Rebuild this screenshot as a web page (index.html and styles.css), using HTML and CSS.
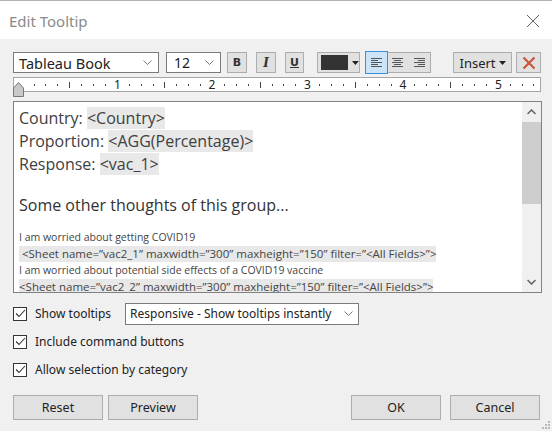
FILE: index.html
```html
<!DOCTYPE html>
<html>
<head>
<meta charset="utf-8">
<link rel="stylesheet" href="styles.css">
</head>
<body>
<div class="dialog">
  <div class="titlebar">
    <span class="title">Edit Tooltip</span>
    <svg class="close" width="14" height="14" viewBox="0 0 14 14"><path d="M1 1L13 13M13 1L1 13" stroke="#666" stroke-width="1" fill="none"/></svg>
  </div>
  <div class="content">
    <div class="toolbar">
      <div class="select font-select"><span>Tableau Book</span><svg class="chev" width="9" height="6" viewBox="0 0 9 6"><path d="M0.5 0.5L4.5 4.5L8.5 0.5" stroke="#777" fill="none"/></svg></div>
      <div class="select size-select"><span>12</span><svg class="chev" width="9" height="6" viewBox="0 0 9 6"><path d="M0.5 0.5L4.5 4.5L8.5 0.5" stroke="#777" fill="none"/></svg></div>
      <div class="tbtn bold">B</div>
      <div class="tbtn ital">I</div>
      <div class="tbtn under">U</div>
      <div class="tbtn color"><span class="swatch"></span><svg width="7" height="4" viewBox="0 0 7 4"><path d="M0 0H7L3.5 4Z" fill="#222"/></svg></div>
      <div class="align-group">
        <div class="abtn on"><svg width="11" height="9" viewBox="0 0 11 9"><path d="M0 0.5H11M0 2.5H7M0 4.5H11M0 6.5H7M0 8.5H11" stroke="#555"/></svg></div>
        <div class="abtn"><svg width="11" height="9" viewBox="0 0 11 9"><path d="M0 0.5H11M2 2.5H9M0 4.5H11M2 6.5H9M0 8.5H11" stroke="#555"/></svg></div>
        <div class="abtn"><svg width="11" height="9" viewBox="0 0 11 9"><path d="M0 0.5H11M4 2.5H11M0 4.5H11M4 6.5H11M0 8.5H11" stroke="#555"/></svg></div>
      </div>
      <div class="tbtn insert">Insert<svg width="7" height="4" viewBox="0 0 7 4"><path d="M0 0H7L3.5 4Z" fill="#222"/></svg></div>
      <div class="tbtn clear"><svg width="14" height="14" viewBox="0 0 14 14"><path d="M1.5 1.5L12.5 12.5M12.5 1.5L1.5 12.5" stroke="#c9573a" stroke-width="2.2" fill="none"/></svg></div>
    </div>
    <div class="ruler-wrap">
      <svg class="ruler" width="528" height="15" viewBox="0 0 528 15">
        <rect x="0.5" y="0.5" width="527" height="14" fill="#fff" stroke="#a5a5a5"/>
        <g stroke="#444" stroke-width="1">
          <path d="M21.5 7V9M32.5 7V9M44.5 7V9M68.5 7V9M80.5 7V9M92.5 7V9"/>
          <path d="M116.5 7V9M128.5 7V9M140.5 7V9M163.5 7V9M175.5 7V9M187.5 7V9"/>
          <path d="M211.5 7V9M223.5 7V9M235.5 7V9M259.5 7V9M270.5 7V9M282.5 7V9"/>
          <path d="M306.5 7V9M318.5 7V9M330.5 7V9M354.5 7V9M366.5 7V9M378.5 7V9"/>
          <path d="M401.5 7V9M413.5 7V9M425.5 7V9M449.5 7V9M461.5 7V9M473.5 7V9"/>
          <path d="M497.5 7V9M509.5 7V9M520.5 7V9"/>
          <path d="M56.5 5V11M151.5 5V11M247.5 5V11M342.5 5V11M437.5 5V11"/>
        </g>
        <g font-family="Noto Sans, sans-serif" font-size="12" fill="#222" text-anchor="middle">
          <text x="104.5" y="12">1</text>
          <text x="199" y="12">2</text>
          <text x="294.5" y="12">3</text>
          <text x="390" y="12">4</text>
          <text x="485.5" y="12">5</text>
        </g>
      </svg>
      <svg class="marker" width="11" height="15" viewBox="0 0 11 15"><path d="M5.5 0.5L10.5 6V14.5H0.5V6Z" fill="#c8c8c8" stroke="#777"/></svg>
    </div>
    <div class="editor">
      <div class="text">
        <div class="big">Country: <span class="fld">&lt;Country&gt;</span></div>
        <div class="big">Proportion: <span class="fld">&lt;AGG(Percentage)&gt;</span></div>
        <div class="big">Response: <span class="fld">&lt;vac_1&gt;</span></div>
        <div class="blank"></div>
        <div class="big heading">Some other thoughts of this group...</div>
        <div class="small gap">I am worried about getting COVID19</div>
        <div class="small sheet"><span class="fld">&nbsp;&lt;Sheet name=”vac2_1” maxwidth=”300” maxheight=”150” filter=”&lt;All Fields&gt;”&gt;</span></div>
        <div class="small">I am worried about potential side effects of a COVID19 vaccine</div>
        <div class="small sheet"><span class="fld">&lt;Sheet name=”vac2_2” maxwidth=”300” maxheight=”150” filter=”&lt;All Fields&gt;”&gt;</span></div>
      </div>
      <div class="scrollbar">
        <svg class="arrow" width="9" height="6" viewBox="0 0 9 6"><path d="M0.5 5L4.5 1L8.5 5" stroke="#606060" stroke-width="1.5" fill="none"/></svg>
        <div class="thumb"></div>
        <div class="track"></div>
        <svg class="arrow" width="9" height="6" viewBox="0 0 9 6"><path d="M0.5 1L4.5 5L8.5 1" stroke="#606060" stroke-width="1.5" fill="none"/></svg>
      </div>
    </div>
    <div class="options">
      <div class="opt">
        <span class="cb"><svg width="11" height="9" viewBox="0 0 11 9"><path d="M1 4.5L4 7.5L10 1" stroke="#333" stroke-width="1.1" fill="none"/></svg></span>
        <span class="lbl">Show tooltips</span>
        <div class="select resp-select"><span>Responsive - Show tooltips instantly</span><svg class="chev" width="9" height="6" viewBox="0 0 9 6"><path d="M0.5 0.5L4.5 4.5L8.5 0.5" stroke="#777" fill="none"/></svg></div>
      </div>
      <div class="opt">
        <span class="cb"><svg width="11" height="9" viewBox="0 0 11 9"><path d="M1 4.5L4 7.5L10 1" stroke="#333" stroke-width="1.1" fill="none"/></svg></span>
        <span class="lbl">Include command buttons</span>
      </div>
      <div class="opt">
        <span class="cb"><svg width="11" height="9" viewBox="0 0 11 9"><path d="M1 4.5L4 7.5L10 1" stroke="#333" stroke-width="1.1" fill="none"/></svg></span>
        <span class="lbl">Allow selection by category</span>
      </div>
    </div>
    <div class="buttons">
      <div class="btn">Reset</div>
      <div class="btn">Preview</div>
      <div class="spacer"></div>
      <div class="btn">OK</div>
      <div class="btn">Cancel</div>
    </div>
  </div>
  <svg class="grip" width="8" height="8" viewBox="0 0 8 8"><g fill="#b8b8b8"><rect x="6" y="0" width="2" height="2"/><rect x="3" y="3" width="2" height="2"/><rect x="6" y="3" width="2" height="2"/><rect x="0" y="6" width="2" height="2"/><rect x="3" y="6" width="2" height="2"/><rect x="6" y="6" width="2" height="2"/></g></svg>
</div>
</body>
</html>
```
FILE: styles.css
```css
html, body {
  margin: 0;
  padding: 0;
}
body {
  width: 552px;
  height: 431px;
  overflow: hidden;
  background: #f0f0f0;
  font-family: "Noto Sans", "Open Sans", sans-serif;
  font-size: 12px;
  color: #222;
}
.dialog {
  position: relative;
  width: 552px;
  height: 431px;
  background: #f0f0f0;
  box-sizing: border-box;
  border-top: 1px solid #b4b4b4;
}
.titlebar {
  height: 38px;
  background: #fff;
  display: flex;
  align-items: center;
  justify-content: space-between;
  padding: 0 12px 0 9px;
  box-sizing: border-box;
}
.title {
  font-size: 15px;
  color: #8a8a8a;
  margin-top: 1px;
}
.close {
  margin-top: 2px;
}
.content {
  padding: 13px 0 0 13px;
}
.toolbar {
  display: flex;
  height: 21px;
  align-items: stretch;
}
.select {
  background: #fff;
  border: 1px solid #7a7a7a;
  box-sizing: border-box;
  display: flex;
  align-items: center;
  justify-content: space-between;
  padding: 0 6px 0 5px;
}
.select span {
  white-space: nowrap;
}
.font-select {
  width: 146px;
  font-size: 14.5px;
  color: #222;
}
.size-select {
  width: 55px;
  margin-left: 7px;
  font-size: 14px;
  padding-left: 7px;
  padding-right: 6px;
}
.tbtn {
  background: #e1e1e1;
  border: 1px solid #adadad;
  box-sizing: border-box;
  display: flex;
  align-items: center;
  justify-content: center;
  font-size: 12px;
}
.bold {
  width: 20px;
  margin-left: 6px;
  font-family: "DejaVu Sans", sans-serif;
  font-weight: bold;
  font-size: 11px;
  color: #333;
}
.ital {
  width: 20px;
  margin-left: 9px;
  font-family: "DejaVu Serif", serif;
  font-style: italic;
  font-weight: bold;
  font-size: 12px;
  color: #333;
}
.under {
  width: 19px;
  margin-left: 9px;
  font-family: "DejaVu Sans", sans-serif;
  font-weight: bold;
  font-size: 11px;
  text-decoration: underline;
  color: #333;
}
.color {
  width: 43px;
  margin-left: 13px;
  justify-content: flex-start;
  padding-left: 3px;
  gap: 4px;
}
.swatch {
  width: 28px;
  height: 15px;
  background: #333;
  display: block;
}
.align-group {
  display: flex;
  margin-left: 6px;
  border: 1px solid #adadad;
  background: #e1e1e1;
  box-sizing: border-box;
  width: 65px;
}
.abtn {
  flex: 1;
  display: flex;
  align-items: center;
  justify-content: center;
}
.abtn.on {
  background: #cce4f7;
  outline: 1px solid #3d8fd6;
  margin: -1px 0 -1px -1px;
}
.insert {
  width: 59px;
  margin-left: 22px;
  gap: 3px;
  font-size: 13px;
  color: #222;
}
.clear {
  width: 25px;
  margin-left: 4px;
}
.ruler-wrap {
  position: relative;
  margin-top: 4px;
  height: 19px;
}
.ruler {
  display: block;
}
.marker {
  position: absolute;
  left: 0;
  top: 5px;
}
.editor {
  margin-top: 5px;
  width: 529px;
  height: 192px;
  box-sizing: border-box;
  border: 1px solid #828282;
  background: #fff;
  display: flex;
}
.text {
  flex: 1;
  overflow: hidden;
  padding: 5px 0 0 5px;
  color: #333;
}
.big {
  font-family: "Open Sans", sans-serif;
  font-size: 16px;
  height: 23px;
  line-height: 23px;
  white-space: nowrap;
  color: #404040;
}
.blank {
  height: 18px;
}
.fld {
  background: #e8e8e8;
}
.heading {
  font-weight: 500;
  color: #333;
}
.small {
  font-family: "Open Sans", sans-serif;
  font-size: 10.5px;
  line-height: 16.5px;
  height: 16.5px;
  white-space: nowrap;
  color: #444;
}
.sheet {
  font-size: 11.5px;
}
.small .fld {
  display: inline-block;
  line-height: 16px;
}
.gap {
  margin-top: 12px;
}
.scrollbar {
  width: 19px;
  background: #f0f0f0;
  display: flex;
  flex-direction: column;
  align-items: center;
}
.arrow {
  margin: 7px 0;
}
.thumb {
  width: 19px;
  height: 82px;
  background: #cdcdcd;
}
.track {
  flex: 1;
}
.options {
  margin-top: 10px;
}
.opt {
  display: flex;
  align-items: center;
  height: 21px;
  margin-bottom: 7px;
}
.cb {
  width: 14px;
  height: 14px;
  border: 1px solid #333;
  box-sizing: border-box;
  background: #fff;
  display: flex;
  align-items: center;
  justify-content: center;
}
.lbl {
  margin-left: 8px;
  font-size: 12px;
  color: #222;
}
.resp-select {
  width: 234px;
  height: 22px;
  margin-left: 14px;
  border-color: #7a7a7a;
  font-size: 12px;
  padding-left: 4px;
  padding-right: 5px;
}
.buttons {
  display: flex;
  margin-top: 15px;
  width: 527px;
}
.btn {
  width: 90px;
  height: 25px;
  box-sizing: border-box;
  background: #e1e1e1;
  border: 1px solid #adadad;
  display: flex;
  align-items: center;
  justify-content: center;
  font-size: 12.5px;
  color: #222;
  margin-right: 5px;
}
.btn:last-child {
  margin-right: 0;
  margin-left: 4px;
}
.spacer {
  flex: 1;
}
.grip {
  position: absolute;
  right: 2px;
  bottom: 2px;
}
```
